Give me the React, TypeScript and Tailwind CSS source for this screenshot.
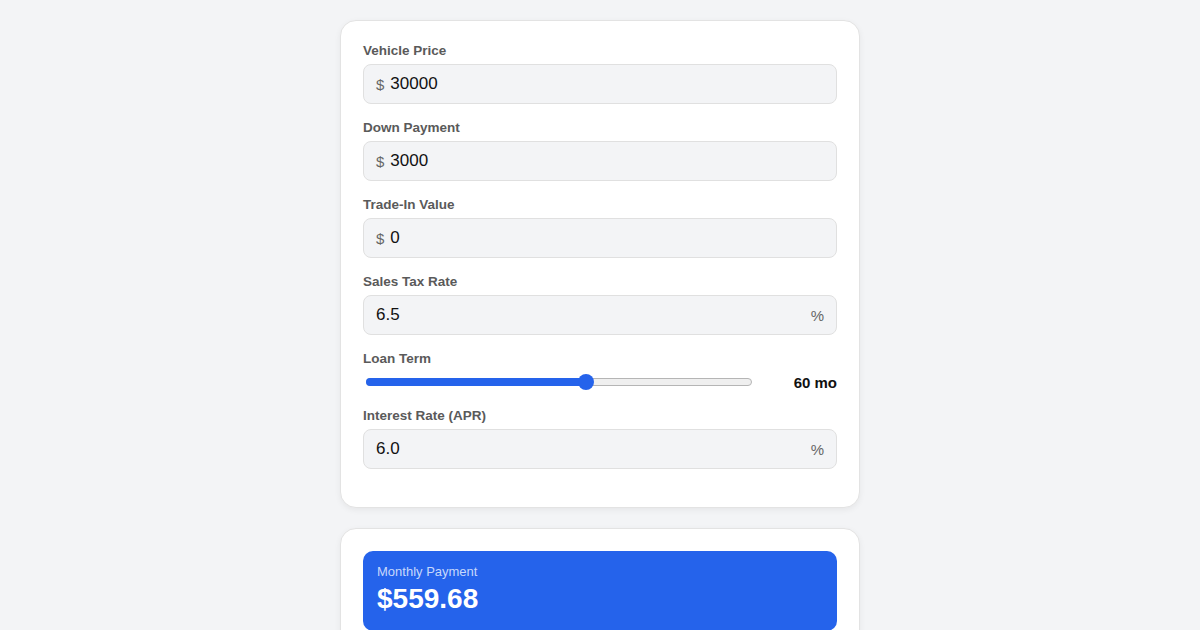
import React from "react";

function MoneyField({ label, value, prefix, suffix }: { label: string; value: string; prefix?: string; suffix?: string }) {
  return (
    <div className="mb-4">
      <div className="text-[13.5px] leading-[15px] font-bold text-[#5a5a5a] mb-[6px]">{label}</div>
      <div className="h-10 flex items-center rounded-lg bg-[#f3f4f6] border border-[#e0e0e0] px-3">
        {prefix && <span className="text-[15px] text-[#666] mr-[6px] mt-[2px]">{prefix}</span>}
        <span className="text-[17px] text-[#111] flex-1">{value}</span>
        {suffix && <span className="text-[15px] text-[#666] mt-[3px]">{suffix}</span>}
      </div>
    </div>
  );
}

export default function App() {
  const min = 12, max = 96, val = 60;
  const frac = (val - min) / (max - min);
  return (
    <div className="min-h-[630px] bg-[#f3f4f6] flex flex-col items-center pt-5 gap-5" style={{ fontFamily: '"Liberation Sans", Arial, sans-serif' }}>
      <div className="w-[520px] bg-white border border-[#e3e3e3] rounded-2xl shadow-[0_2px_6px_rgba(0,0,0,0.06)] p-[22px]">
        <MoneyField label="Vehicle Price" value="30000" prefix="$" />
        <MoneyField label="Down Payment" value="3000" prefix="$" />
        <MoneyField label="Trade-In Value" value="0" prefix="$" />
        <MoneyField label="Sales Tax Rate" value="6.5" suffix="%" />
        <div className="mb-4">
          <div className="text-[13.5px] leading-[15px] font-bold text-[#5a5a5a] mb-[6px]">Loan Term</div>
          <div className="h-5 flex items-center">
            <div className="w-[392px] h-5 relative">
              <div className="absolute left-[3px] right-[3px] top-[6px] h-2 rounded-full bg-[#efefef] border border-[#b5b5b5]" />
              <div className="absolute left-[3px] top-[6px] h-2 rounded-full bg-[#2563eb]" style={{ width: `${8 + frac * 376 - 3}px` }} />
              <div className="absolute top-[2px] w-4 h-4 rounded-full bg-[#2563eb]" style={{ left: `${frac * 376}px` }} />
            </div>
            <div className="flex-1 text-right text-[15px] font-bold text-[#111] mt-[2px]">60 mo</div>
          </div>
        </div>
        <MoneyField label="Interest Rate (APR)" value="6.0" suffix="%" />
      </div>
      <div className="w-[520px] bg-white border border-[#e3e3e3] rounded-2xl shadow-[0_2px_6px_rgba(0,0,0,0.06)] p-[22px]">
        <div className="bg-[#2563eb] rounded-[10px] px-[14px] pt-[13px] pb-4">
          <div className="text-[13px] text-[#c7d8fb] leading-[15px]">Monthly Payment</div>
          <div className="text-[28px] font-bold text-white leading-[32px] mt-[4px]">$559.68</div>
        </div>
        <div className="h-40" />
      </div>
    </div>
  );
}
